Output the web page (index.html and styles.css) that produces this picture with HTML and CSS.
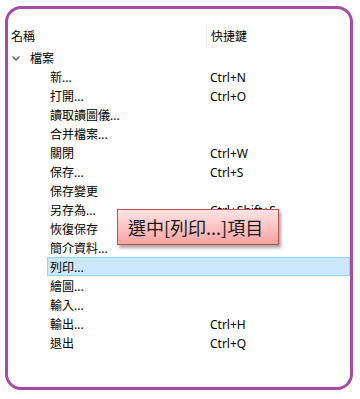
FILE: index.html
```html
<!DOCTYPE html>
<html>
<head>
<meta charset="utf-8">
<link rel="stylesheet" href="styles.css">
</head>
<body>
<div class="frame">
  <div class="header">
    <div class="hcell">名稱</div>
    <div class="hcell key">快捷鍵</div>
  </div>
  <div class="rows">
    <div class="row top">
      <div class="name"><svg class="chev" width="8" height="5" viewBox="0 0 8 5"><polyline points="0.5,0.5 4,4 7.5,0.5" fill="none" stroke="#5a5a5a" stroke-width="1.3"/></svg>檔案</div>
      <div class="key"></div>
    </div>
    <div class="row child"><div class="name">新...</div><div class="key">Ctrl+N</div></div>
    <div class="row child"><div class="name">打開...</div><div class="key">Ctrl+O</div></div>
    <div class="row child"><div class="name">讀取讀圖儀...</div><div class="key"></div></div>
    <div class="row child"><div class="name">合并檔案...</div><div class="key"></div></div>
    <div class="row child"><div class="name">關閉</div><div class="key">Ctrl+W</div></div>
    <div class="row child"><div class="name">保存...</div><div class="key">Ctrl+S</div></div>
    <div class="row child"><div class="name">保存變更</div><div class="key"></div></div>
    <div class="row child"><div class="name">另存為...</div><div class="key">Ctrl+Shift+S</div></div>
    <div class="row child"><div class="name">恢復保存</div><div class="key"></div></div>
    <div class="row child"><div class="name">簡介資料...</div><div class="key"></div></div>
    <div class="row child selected"><div class="name">列印...</div><div class="key"></div></div>
    <div class="row child"><div class="name">繪圖...</div><div class="key"></div></div>
    <div class="row child"><div class="name">輸入...</div><div class="key"></div></div>
    <div class="row child"><div class="name">輸出...</div><div class="key">Ctrl+H</div></div>
    <div class="row child"><div class="name">退出</div><div class="key">Ctrl+Q</div></div>
  </div>
  <div class="tip">選中[列印...]項目</div>
</div>
</body>
</html>
```
FILE: styles.css
```css
html, body {
  margin: 0;
  padding: 0;
  background: #ffffff;
}
body {
  font-family: "Noto Sans", "Noto Sans CJK TC", sans-serif;
  font-size: 12px;
  color: #000;
}
.frame {
  position: relative;
  box-sizing: border-box;
  margin: 6px 0 0 5px;
  width: 348px;
  height: 384px;
  border: 3px solid #a54ca4;
  border-radius: 16px;
  padding-top: 15px;
}
.header {
  display: grid;
  grid-template-columns: 198px 1fr;
  height: 24px;
}
.hcell {
  display: flex;
  align-items: center;
  padding-left: 3px;
}
.hcell.key {
  border-left: 1px solid #e5e5e5;
  padding-left: 4px;
}
.rows {
  display: flex;
  flex-direction: column;
}
.row {
  box-sizing: border-box;
  display: grid;
  grid-template-columns: 198px 1fr;
  height: 19px;
  align-items: center;
  border: 1px solid transparent;
}
.row .name {
  display: flex;
  align-items: center;
  white-space: nowrap;
}
.row .key {
  padding-left: 3px;
  white-space: nowrap;
}
.row.top .name {
  padding-left: 3px;
}
.chev {
  margin-right: 10px;
}
.row.child {
  margin-left: 39px;
  grid-template-columns: 159px 1fr;
}
.row.child .name {
  padding-left: 2px;
}
.row.selected {
  background: #cce8ff;
  border-color: #99d1ff;
}
.tip {
  position: absolute;
  left: 109px;
  top: 200px;
  box-sizing: border-box;
  width: 162px;
  height: 36px;
  border: 1px solid #c0504d;
  background: linear-gradient(#ffe3e3, #f7a3a2);
  box-shadow: 2px 3px 3px rgba(0, 0, 0, 0.35);
  font-size: 18px;
  color: #1a1a1a;
  display: flex;
  align-items: center;
  padding-left: 10px;
  white-space: nowrap;
  font-family: "Noto Sans CJK TC", "Noto Sans", sans-serif;
}
```
